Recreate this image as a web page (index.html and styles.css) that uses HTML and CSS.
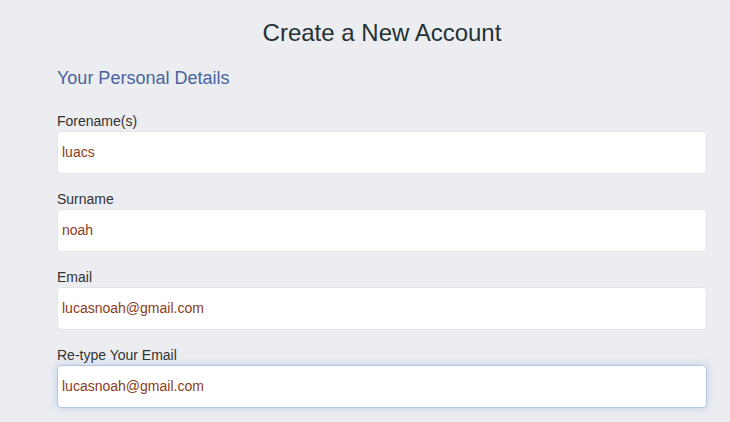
FILE: index.html
```html
<!DOCTYPE html>
<html>
<head>
<meta charset="utf-8">
<link rel="stylesheet" href="styles.css">
</head>
<body>
<div class="page">
  <h1 class="title">Create a New Account</h1>
  <h2 class="section">Your Personal Details</h2>
  <div class="field">
    <label class="label">Forename(s)</label>
    <div class="input">luacs</div>
  </div>
  <div class="field">
    <label class="label">Surname</label>
    <div class="input">noah</div>
  </div>
  <div class="field">
    <label class="label">Email</label>
    <div class="input">lucasnoah@gmail.com</div>
  </div>
  <div class="field">
    <label class="label">Re-type Your Email</label>
    <div class="input focused">lucasnoah@gmail.com</div>
  </div>
</div>
</body>
</html>
```
FILE: styles.css
```css
html, body {
  margin: 0;
  padding: 0;
  background: #ecedf1;
  font-family: "Liberation Sans", Arial, sans-serif;
}
.page {
  width: 650px;
  margin-left: 57px;
  padding-top: 10px;
}
.title {
  margin: 0;
  font-size: 24px;
  font-weight: normal;
  line-height: 46px;
  text-align: center;
  color: #253136;
}
.section {
  margin: 2px 0 13px;
  font-size: 18px;
  font-weight: normal;
  line-height: 40px;
  color: #4863a0;
}
.field {
  display: flex;
  flex-direction: column;
  margin-bottom: 15px;
}
.label {
  font-size: 14px;
  line-height: 20px;
  color: #333;
}
.input {
  box-sizing: border-box;
  height: 43px;
  background: #fff;
  border: 1px solid #e3e4e8;
  border-radius: 4px;
  padding: 0 4px;
  font-size: 14px;
  line-height: 41px;
  color: #8c3b20;
}
.input.focused {
  border-color: #b3c7de;
  box-shadow: 0 0 8px rgba(102, 150, 210, 0.35);
}
```
